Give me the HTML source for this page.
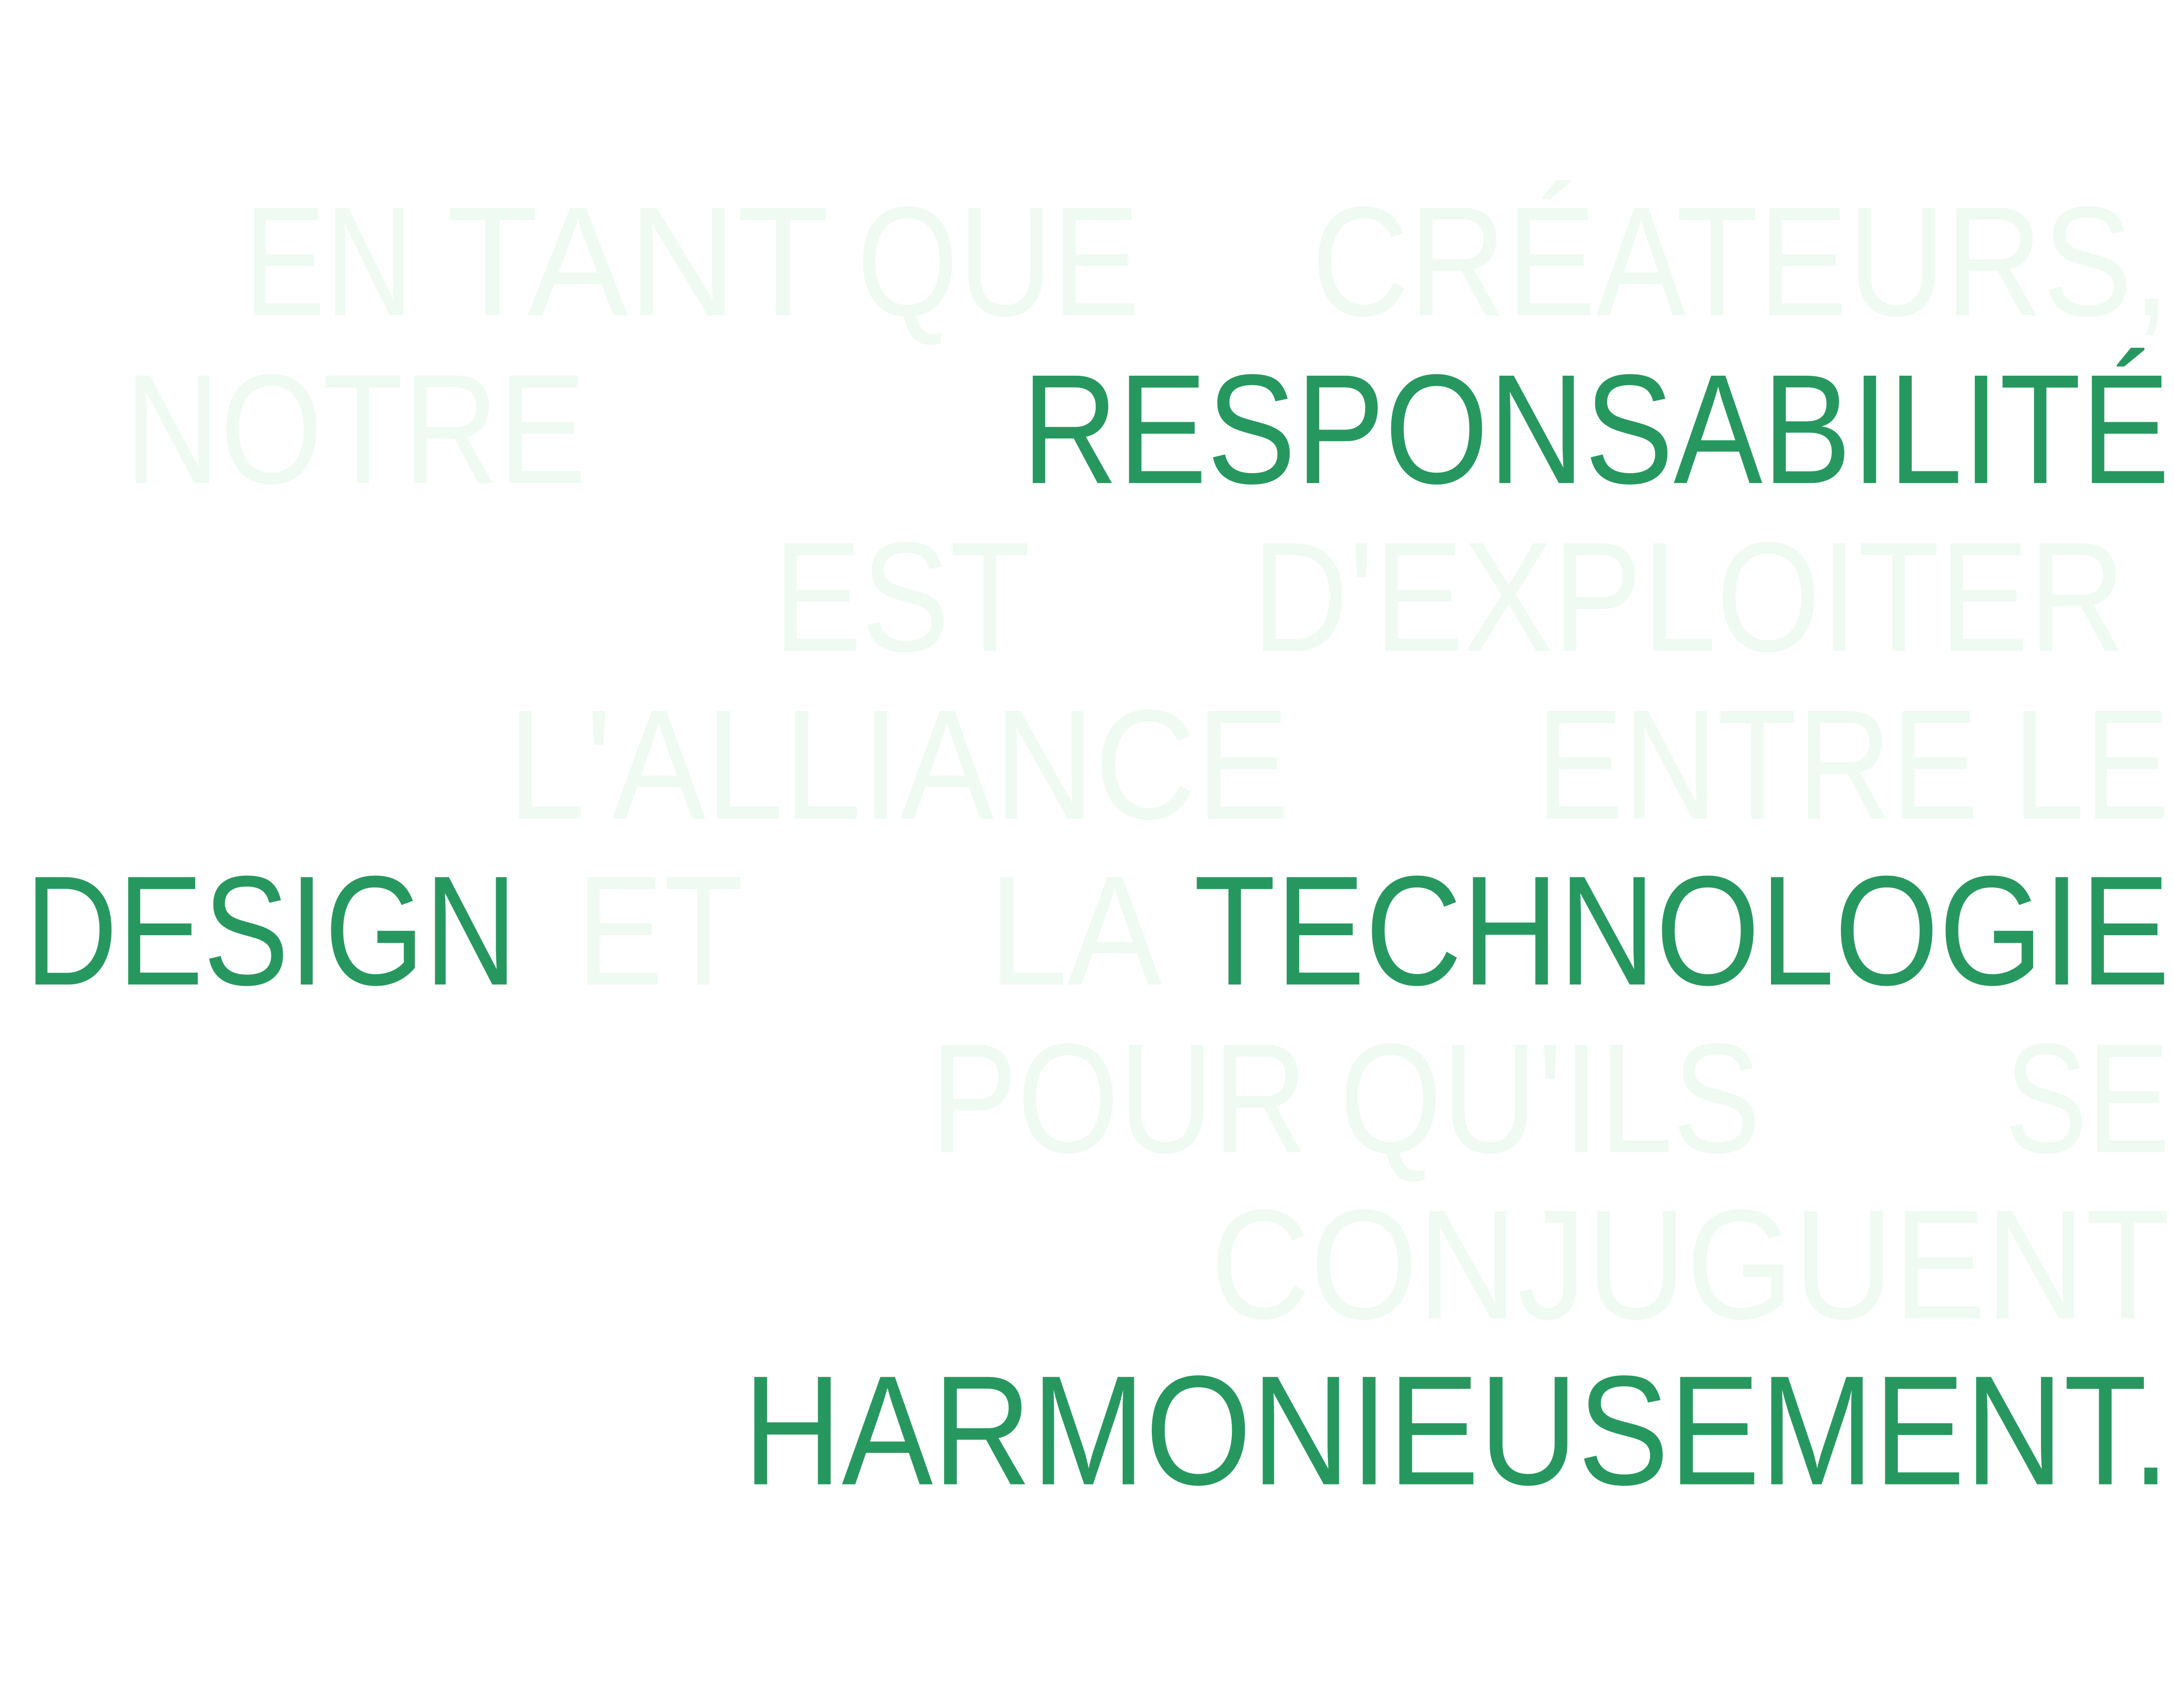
<!DOCTYPE html>
<html><head><meta charset="utf-8"><style>
html,body{margin:0;padding:0;background:#fff;width:100%;height:100%;overflow:hidden;}
svg{display:block;position:fixed;left:0;top:0;width:100vw;height:100vh;}
text{font-family:"Liberation Sans",sans-serif;font-size:93px;}
.l{fill:#eefaf2;}
.d{fill:#26985f;}
</style></head><body>
<svg viewBox="0 0 1568 1018.4" preserveAspectRatio="none" xmlns="http://www.w3.org/2000/svg">
<text class="l" x="176" y="188" textLength="122" lengthAdjust="spacingAndGlyphs">EN</text>
<text class="l" x="322" y="188" textLength="276" lengthAdjust="spacingAndGlyphs">TANT</text>
<text class="l" x="618" y="188" textLength="204" lengthAdjust="spacingAndGlyphs">QUE</text>
<text class="l" x="946" y="188" textLength="619" lengthAdjust="spacingAndGlyphs">CRÉATEURS,</text>
<text class="l" x="90" y="288" textLength="333" lengthAdjust="spacingAndGlyphs">NOTRE</text>
<text class="d" x="737" y="288" textLength="828" lengthAdjust="spacingAndGlyphs">RESPONSABILITÉ</text>
<text class="l" x="558" y="388" textLength="185" lengthAdjust="spacingAndGlyphs">EST</text>
<text class="l" x="903" y="388" textLength="630" lengthAdjust="spacingAndGlyphs">D'EXPLOITER</text>
<text class="l" x="366" y="488" textLength="564" lengthAdjust="spacingAndGlyphs">L'ALLIANCE</text>
<text class="l" x="1108" y="488" textLength="319" lengthAdjust="spacingAndGlyphs">ENTRE</text>
<text class="l" x="1452" y="488" textLength="113" lengthAdjust="spacingAndGlyphs">LE</text>
<text class="d" x="18" y="587" textLength="355" lengthAdjust="spacingAndGlyphs">DESIGN</text>
<text class="l" x="416" y="587" textLength="120" lengthAdjust="spacingAndGlyphs">ET</text>
<text class="l" x="713" y="587" textLength="125" lengthAdjust="spacingAndGlyphs">LA</text>
<text class="d" x="861" y="587" textLength="704" lengthAdjust="spacingAndGlyphs">TECHNOLOGIE</text>
<text class="l" x="671" y="687" textLength="272" lengthAdjust="spacingAndGlyphs">POUR</text>
<text class="l" x="966" y="687" textLength="304" lengthAdjust="spacingAndGlyphs">QU'ILS</text>
<text class="l" x="1446" y="687" textLength="119" lengthAdjust="spacingAndGlyphs">SE</text>
<text class="l" x="873" y="786" textLength="692" lengthAdjust="spacingAndGlyphs">CONJUGUENT</text>
<text class="d" x="536" y="885" textLength="1029" lengthAdjust="spacingAndGlyphs">HARMONIEUSEMENT.</text>
</svg>
</body></html>
